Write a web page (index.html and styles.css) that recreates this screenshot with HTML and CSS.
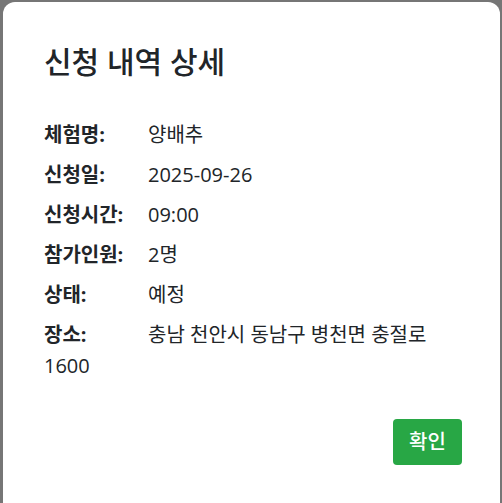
FILE: index.html
```html
<!DOCTYPE html>
<html>
<head>
    <meta charset="utf-8">
    <title>신청 내역 상세</title>
    <link rel="stylesheet" href="styles.css">
</head>
<body>
<div class="modal">
    <h2 class="modal-title">신청 내역 상세</h2>
    <div class="detail">
        <p class="row"><span class="label">체험명:</span>양배추</p>
        <p class="row"><span class="label">신청일:</span>2025-09-26</p>
        <p class="row"><span class="label">신청시간:</span>09:00</p>
        <p class="row"><span class="label">참가인원:</span>2명</p>
        <p class="row"><span class="label">상태:</span>예정</p>
        <p class="row"><span class="label">장소:</span>충남 천안시 동남구 병천면 충절로 1600</p>
    </div>
    <div class="footer">
        <div class="btn">확인</div>
    </div>
</div>
</body>
</html>
```

FILE: styles.css
```css
* {
    padding: 0;
    margin: 0;
    box-sizing: border-box;
}

html, body {
    height: 100%;
}

body {
    overflow: hidden;
    background-color: #767676;
    font-family: "Open Sans", "Noto Sans CJK KR", sans-serif;
    color: #212529;
}

.modal {
    margin: 2px 2px 0 3px;
    height: 501px;
    padding: 44px 38px 0 41px;
    background-color: #ffffff;
    border-radius: 12px 12px 0 0;
}

.modal-title {
    font-size: 30px;
    line-height: 31px;
    font-weight: 500;
}

.detail {
    margin-top: 42px;
    font-size: 20px;
}

.row {
    line-height: 31px;
    margin-bottom: 9px;
}

.label {
    display: inline-block;
    width: 104px;
    font-weight: 700;
}

.footer {
    display: flex;
    justify-content: flex-end;
    margin-top: 38px;
}

.btn {
    width: 69px;
    height: 46px;
    line-height: 46px;
    text-align: center;
    font-size: 20px;
    font-weight: 500;
    color: #ffffff;
    background-color: #28a745;
    border-radius: 4px;
}
```
